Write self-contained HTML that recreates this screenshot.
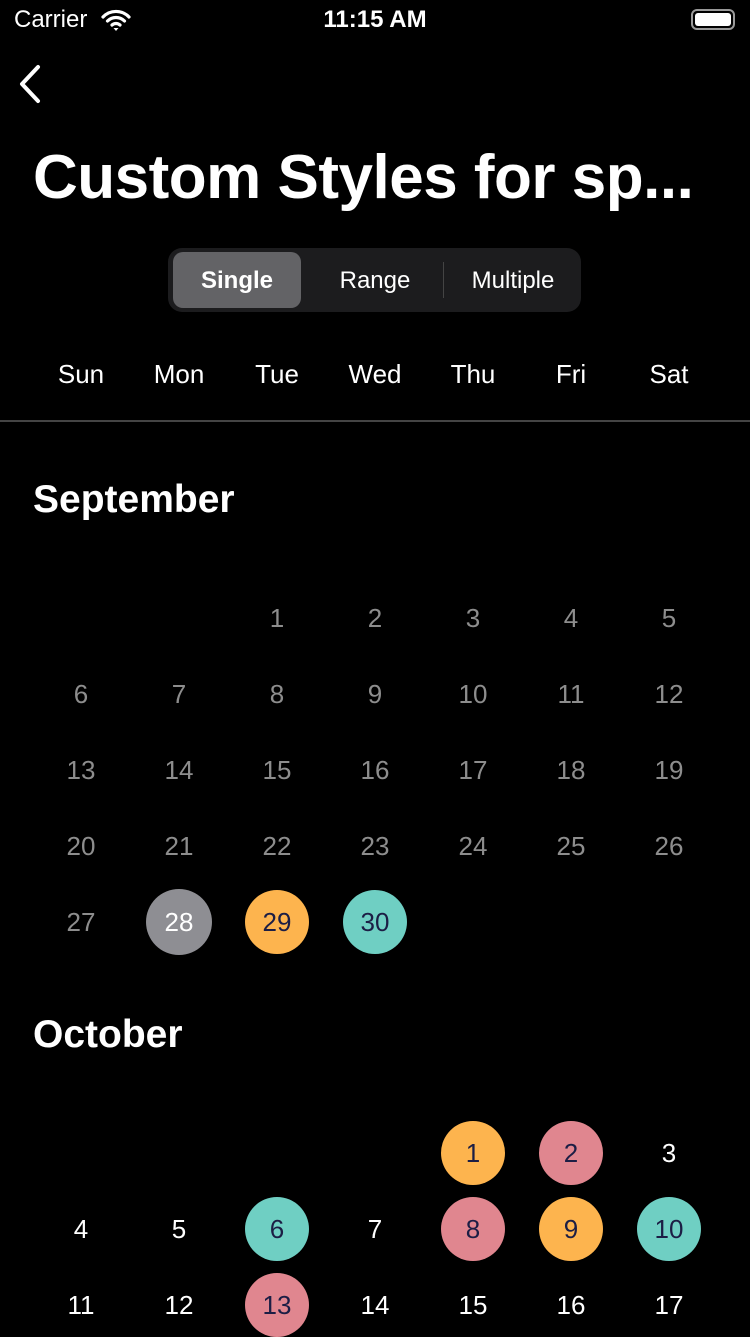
<!DOCTYPE html>
<html><head><style>
*{margin:0;padding:0;box-sizing:border-box}
body{width:750px;height:1334px;background:#000;color:#fff;font-family:"Liberation Sans",sans-serif;position:relative;overflow:hidden}
.a{position:absolute}
.d{position:absolute;width:98px;text-align:center;font-size:26px;line-height:30px;margin-top:-15px}
.g{color:#8d8d8d}
.w{color:#fff}
.c{position:absolute;width:64px;height:64px;border-radius:50%;margin:-32px 0 0 -32px;text-align:center;line-height:64px;font-size:26px;color:#1c1e45}
.wd{position:absolute;width:98px;text-align:center;font-size:26px;top:359px}
</style></head><body>
<div class="a" style="left:14px;top:6px;font-size:24px">Carrier</div>
<svg class="a" style="left:100px;top:8px" width="32" height="24" viewBox="0 0 32 24"><path d="M3 9a18 18 0 0 1 26 0M7.5 13a12 12 0 0 1 17 0M12 17a6 6 0 0 1 8 0" stroke="#fff" stroke-width="3.2" fill="none" stroke-linecap="round"/><path d="M13.5 20L16 23l2.5-3z" fill="#fff"/></svg>
<div class="a" style="left:0;width:750px;text-align:center;top:6px;font-size:24px;font-weight:bold">11:15 AM</div>
<div class="a" style="left:691px;top:9px;width:44px;height:21px;border:2px solid #999;border-radius:6px"></div>
<div class="a" style="left:695px;top:13px;width:36px;height:13px;background:#fff;border-radius:3px"></div>
<svg class="a" style="left:14px;top:64px" width="30" height="40"><path d="M24 3L8 20l16 17" stroke="#fff" stroke-width="4" fill="none" stroke-linecap="round" stroke-linejoin="round"/></svg>
<div class="a" style="left:33px;top:142px;font-size:62px;font-weight:bold;letter-spacing:-0.5px">Custom Styles for sp...</div>
<div class="a" style="left:168px;top:248px;width:413px;height:64px;background:#1c1c1e;border-radius:14px"></div>
<div class="a" style="left:173px;top:252px;width:128px;height:56px;background:#636366;border-radius:10px"></div>
<div class="a" style="left:443px;top:262px;width:1px;height:36px;background:#444"></div>
<div class="a" style="left:173px;width:128px;text-align:center;top:267px;font-size:24px;font-weight:bold">Single</div>
<div class="a" style="left:310px;width:130px;text-align:center;top:267px;font-size:24px">Range</div>
<div class="a" style="left:448px;width:130px;text-align:center;top:267px;font-size:24px">Multiple</div>
<div class="wd" style="left:32px">Sun</div><div class="wd" style="left:130px">Mon</div><div class="wd" style="left:228px">Tue</div><div class="wd" style="left:326px">Wed</div><div class="wd" style="left:424px">Thu</div><div class="wd" style="left:522px">Fri</div><div class="wd" style="left:620px">Sat</div>
<div class="a" style="left:0;top:420px;width:750px;height:2px;background:#444"></div>
<div class="a" style="left:33px;top:478px;font-size:39px;font-weight:bold">September</div>
<div class="a" style="left:33px;top:1013px;font-size:39px;font-weight:bold">October</div>

<div class="d g" style="left:228px;top:618px">1</div><div class="d g" style="left:326px;top:618px">2</div><div class="d g" style="left:424px;top:618px">3</div><div class="d g" style="left:522px;top:618px">4</div><div class="d g" style="left:620px;top:618px">5</div>
<div class="d g" style="left:32px;top:694px">6</div><div class="d g" style="left:130px;top:694px">7</div><div class="d g" style="left:228px;top:694px">8</div><div class="d g" style="left:326px;top:694px">9</div><div class="d g" style="left:424px;top:694px">10</div><div class="d g" style="left:522px;top:694px">11</div><div class="d g" style="left:620px;top:694px">12</div>
<div class="d g" style="left:32px;top:770px">13</div><div class="d g" style="left:130px;top:770px">14</div><div class="d g" style="left:228px;top:770px">15</div><div class="d g" style="left:326px;top:770px">16</div><div class="d g" style="left:424px;top:770px">17</div><div class="d g" style="left:522px;top:770px">18</div><div class="d g" style="left:620px;top:770px">19</div>
<div class="d g" style="left:32px;top:846px">20</div><div class="d g" style="left:130px;top:846px">21</div><div class="d g" style="left:228px;top:846px">22</div><div class="d g" style="left:326px;top:846px">23</div><div class="d g" style="left:424px;top:846px">24</div><div class="d g" style="left:522px;top:846px">25</div><div class="d g" style="left:620px;top:846px">26</div>
<div class="d g" style="left:32px;top:922px">27</div>
<div class="c" style="left:179px;top:922px;background:#8e8e93;color:#fff;width:66px;height:66px;line-height:66px;margin:-33px 0 0 -33px">28</div>
<div class="c" style="left:277px;top:922px;background:#fdb44e">29</div>
<div class="c" style="left:375px;top:922px;background:#6fcfc3">30</div>

<div class="c" style="left:473px;top:1153px;background:#fdb44e">1</div>
<div class="c" style="left:571px;top:1153px;background:#e0868f">2</div>
<div class="d w" style="left:620px;top:1153px">3</div>
<div class="d w" style="left:32px;top:1229px">4</div><div class="d w" style="left:130px;top:1229px">5</div>
<div class="c" style="left:277px;top:1229px;background:#6fcfc3">6</div>
<div class="d w" style="left:326px;top:1229px">7</div>
<div class="c" style="left:473px;top:1229px;background:#e0868f">8</div>
<div class="c" style="left:571px;top:1229px;background:#fdb44e">9</div>
<div class="c" style="left:669px;top:1229px;background:#6fcfc3">10</div>
<div class="d w" style="left:32px;top:1305px">11</div><div class="d w" style="left:130px;top:1305px">12</div>
<div class="c" style="left:277px;top:1305px;background:#e0868f">13</div>
<div class="d w" style="left:326px;top:1305px">14</div><div class="d w" style="left:424px;top:1305px">15</div><div class="d w" style="left:522px;top:1305px">16</div><div class="d w" style="left:620px;top:1305px">17</div>
</body></html>
